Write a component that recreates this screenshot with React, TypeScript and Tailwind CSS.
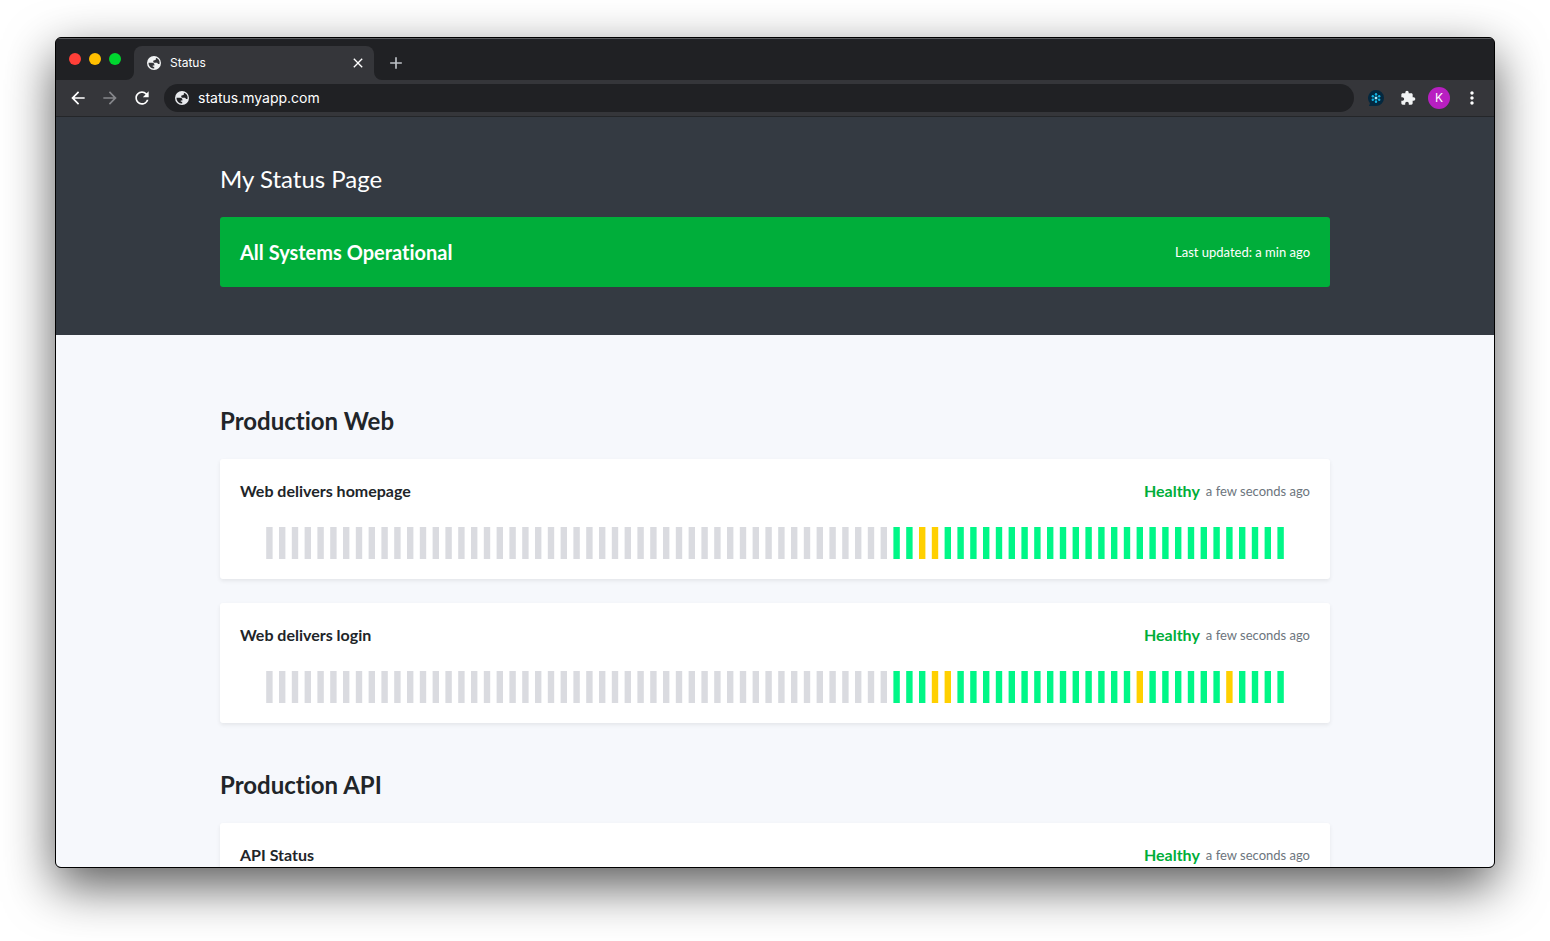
import React from "react";
import { MdArrowBack, MdArrowForward, MdRefresh, MdExtension, MdMoreVert, MdClose, MdAdd } from "react-icons/md";

type Check = { name: string; warnings: number[] };
type Group = { title: string; checks: Check[] };

const SLOTS = 80;
const FIRST_RECORDED = 49;

const groups: Group[] = [
  {
    title: "Production Web",
    checks: [
      { name: "Web delivers homepage", warnings: [51, 52] },
      { name: "Web delivers login", warnings: [52, 53, 68, 75] },
    ],
  },
  {
    title: "Production API",
    checks: [{ name: "API Status", warnings: [] }],
  },
];

function History({ name, warnings }: Check) {
  return (
    <svg viewBox="0 0 1600 50" className="mx-auto block w-full max-w-[1024px]" role="img" aria-label={`${name} history`}>
      {Array.from({ length: SLOTS }, (_, i) => (
        <rect
          key={i}
          x={i * 20 + 5}
          y={0}
          width={10}
          height={50}
          fill={i < FIRST_RECORDED ? "#dadbe0" : warnings.includes(i) ? "#ffd000" : "#00f787"}
        />
      ))}
    </svg>
  );
}

function CheckCard(check: Check) {
  return (
    <article className="rounded-[3px] bg-white p-5 shadow-[0_2px_4px_rgba(0,0,0,0.075)]">
      <div className="mb-6 flex items-center justify-between">
        <h3 className="text-base font-bold">{check.name}</h3>
        <div className="flex items-center gap-1.5">
          <span className="text-base font-bold text-[#00ae3a]">Healthy</span>
          <span className="text-[13px] leading-5 text-[#6c757d]">a few seconds ago</span>
        </div>
      </div>
      <History {...check} />
    </article>
  );
}

function TabFoot({ className }: { className: string }) {
  return (
    <svg viewBox="0 0 8 8" className={className} aria-hidden="true">
      <path d="M8 0v8H0a8 8 0 0 0 8-8z" fill="#35363a" />
    </svg>
  );
}

function GlobeIcon({ className }: { className: string }) {
  return (
    <svg viewBox="0 0 16 16" className={className} fill="currentColor" fillRule="evenodd" aria-hidden="true">
      <path d="M8 1a7 7 0 1 0 0 14A7 7 0 0 0 8 1zM2.500 7.700h3.700c1.400 0 2.200.9 2.200 2v.7H6.800v1.400h1.400v1.800A5.600 5.600 0 0 1 2.500 7.700zM9.900 2.800A5.600 5.600 0 0 1 13.500 9H12c-.3-.8-.8-1.200-1.700-1.200H8.700c-.9 0-1.500-.6-1.500-1.300 0-.8.6-1.300 1.400-1.300h.2c.7 0 1.100-.5 1.100-1.100z" />
    </svg>
  );
}

function HelperExtensionIcon() {
  return (
    <svg viewBox="0 0 16 16" className="size-4" aria-hidden="true">
      <path d="M8 0a8 8 0 1 1 0 16H1l1-2.800A8 8 0 0 1 8 0z" fill="#04283f" />
      <g stroke="#12a9d6" strokeWidth="0.700">
        <path d="M8 4v8M4.500 6l7 4M11.500 6l-7 4" />
      </g>
      <g fill="#12b5e5">
        <circle cx="8" cy="4.300" r="1.200" />
        <circle cx="8" cy="11.700" r="1.200" />
        <circle cx="4.800" cy="6.200" r="1.200" />
        <circle cx="11.200" cy="6.200" r="1.200" />
        <circle cx="4.800" cy="9.800" r="1.200" />
        <circle cx="11.200" cy="9.800" r="1.200" />
      </g>
      <circle cx="8" cy="8" r="1.200" fill="#b9ecfa" />
    </svg>
  );
}

function BrowserChrome() {
  return (
    <header className="shrink-0 font-['Inter',sans-serif] text-white">
      <div className="flex h-[41px] items-end bg-[#202124] pl-[13px]">
        <div className="flex gap-2 pb-[15px]">
          <button type="button" aria-label="Close window" className="size-3 rounded-full bg-[#ff3f38]" />
          <button type="button" aria-label="Minimize window" className="size-3 rounded-full bg-[#ffbf00]" />
          <button type="button" aria-label="Zoom window" className="size-3 rounded-full bg-[#00d62f]" />
        </div>
        <div className="relative ml-[13px] flex h-[34px] w-60 items-center rounded-t-lg bg-[#35363a] pr-2 pl-3">
          <TabFoot className="absolute bottom-0 -left-2 size-2" />
          <GlobeIcon className="size-4 text-[#f1f3f4]" />
          <span className="ml-2 text-xs">Status</span>
          <button type="button" aria-label="Close tab" className="ml-auto">
            <MdClose className="size-4" />
          </button>
          <TabFoot className="absolute -right-2 bottom-0 size-2 -scale-x-100" />
        </div>
        <button type="button" aria-label="New tab" className="mb-[7px] ml-3 text-[#bdc1c6]">
          <MdAdd className="size-5" />
        </button>
      </div>
      <div className="flex h-[37px] items-center border-b border-[#242629] bg-[#35363a] pr-3 pl-3">
        <div className="flex gap-3">
          <button type="button" aria-label="Back"><MdArrowBack className="size-5" /></button>
          <button type="button" aria-label="Forward" className="text-[#85868a]"><MdArrowForward className="size-5" /></button>
          <button type="button" aria-label="Reload"><MdRefresh className="size-5" /></button>
        </div>
        <label className="ml-3 flex h-7 flex-1 items-center gap-2 rounded-full bg-[#202124] pl-2.5">
          <GlobeIcon className="size-4 text-[#e8eaed]" />
          <input
            type="text"
            aria-label="Address"
            defaultValue="status.myapp.com"
            className="min-w-0 flex-1 bg-transparent text-sm text-white outline-none"
          />
        </label>
        <div className="ml-3.5 flex items-center gap-3">
          <button type="button" aria-label="Helper extension" className="mr-1"><HelperExtensionIcon /></button>
          <button type="button" aria-label="Extensions"><MdExtension className="size-4 text-[#f1f3f4]" /></button>
          <button type="button" aria-label="Profile" className="flex size-[22px] items-center justify-center rounded-full bg-[#b81fc1] text-xs">
            K
          </button>
          <button type="button" aria-label="Menu"><MdMoreVert className="size-5" /></button>
        </div>
      </div>
    </header>
  );
}

export default function App() {
  return (
    <div className="flex h-screen flex-col bg-white px-[55px] pt-[37px] pb-[73px]">
      <div className="flex min-h-0 flex-1 flex-col overflow-hidden rounded-md border border-black bg-[#202124] shadow-[0_18px_50px_rgba(0,0,0,0.65)]">
        <div className="h-px shrink-0 bg-[#5b5c5f]" />
        <BrowserChrome />
        <main className="min-h-0 flex-1 overflow-y-auto bg-[#f6f8fc] font-['Lato',sans-serif] text-[#212529] [font-variant-ligatures:none] [scrollbar-width:none]">
          <section className="bg-[#343a42] py-12 text-white">
            <div className="mx-auto max-w-[1110px]">
              <h1 className="mb-6 text-2xl leading-7">My Status Page</h1>
              <div className="flex items-center justify-between rounded-[3px] bg-[#00ae3a] p-5">
                <p className="text-xl leading-[30px] font-bold">All Systems Operational</p>
                <p className="text-[13px] leading-5">Last updated: a min ago</p>
              </div>
            </div>
          </section>
          <div className="mx-auto flex max-w-[1110px] flex-col gap-12 pt-[72px] pb-12">
            {groups.map((group) => (
              <section key={group.title}>
                <h2 className="mb-6 text-2xl leading-7 font-bold">{group.title}</h2>
                <div className="flex flex-col gap-6">
                  {group.checks.map((check) => (
                    <CheckCard key={check.name} {...check} />
                  ))}
                </div>
              </section>
            ))}
          </div>
        </main>
      </div>
    </div>
  );
}
